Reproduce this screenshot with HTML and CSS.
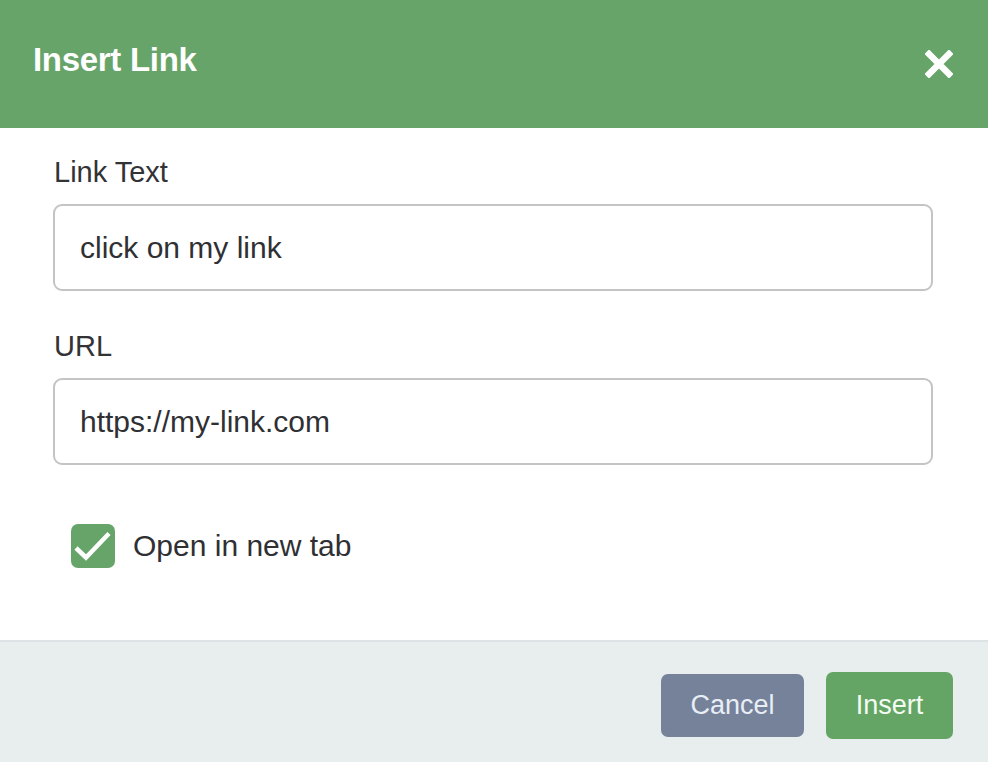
FILE: index.html
```html
<!DOCTYPE html>
<html lang="en">
<head>
    <meta charset="UTF-8">
    <meta name="viewport" content="width=device-width, initial-scale=1.0">
    <title>Insert Link</title>
    <link rel="stylesheet" href="styles.css">
</head>
<body>
    <div class="modal">
        <header class="modal-header">
            <h1>Insert Link</h1>
            <button class="close" aria-label="Close">
                <svg width="28" height="28" viewBox="0 0 28 28">
                    <path d="M4 4 L24 24 M24 4 L4 24" stroke="#fff" stroke-width="6.5" stroke-linecap="square"/>
                </svg>
            </button>
        </header>

        <section class="modal-body">
            <label class="field-label" for="link-text">Link Text</label>
            <input class="field" id="link-text" type="text" value="click on my link">

            <label class="field-label url-label" for="link-url">URL</label>
            <input class="field" id="link-url" type="text" value="https://my-link.com">

            <label class="check">
                <span class="box">
                    <svg width="44" height="44" viewBox="0 0 44 44">
                        <path d="M5 24 L15 33.5 L38 9.5" fill="none" stroke="#fff" stroke-width="4.5"/>
                    </svg>
                </span>
                Open in new tab
            </label>
        </section>

        <footer class="modal-footer">
            <button class="btn btn-cancel">Cancel</button>
            <button class="btn btn-insert">Insert</button>
        </footer>
    </div>
</body>
</html>
```

FILE: styles.css
```css
body {
    margin: 0;
    padding: 0;
    font-family: "Liberation Sans", Arial, sans-serif;
    background-color: #ffffff;
}
.modal {
    height: 762px;
    display: flex;
    flex-direction: column;
    overflow: hidden;
}
.modal-header {
    height: 128px;
    box-sizing: border-box;
    background-color: #66a469;
    display: flex;
    align-items: center;
    justify-content: space-between;
    padding: 0 35px 0 33px;
}
.modal-header h1 {
    margin: 0 0 9px 0;
    color: #ffffff;
    font-size: 33px;
    font-weight: bold;
    letter-spacing: -0.3px;
}
.close {
    background: none;
    border: none;
    padding: 0;
    width: 28px;
    height: 28px;
    cursor: pointer;
}
.close svg {
    display: block;
}
.modal-body {
    flex: 1;
    display: flex;
    flex-direction: column;
    align-items: flex-start;
    padding: 27px 55px 0 53px;
}
.field-label {
    font-size: 29px;
    line-height: 34px;
    color: #333336;
    margin-left: 1px;
    margin-bottom: 15px;
}
.url-label {
    margin-top: 38px;
}
.field {
    width: 100%;
    height: 87px;
    box-sizing: border-box;
    border: 2px solid #c4c4c6;
    border-radius: 9px;
    padding: 0 25px;
    font-family: "Liberation Sans", Arial, sans-serif;
    font-size: 30px;
    color: #2f3033;
    background-color: #ffffff;
    outline: none;
}
.check {
    display: flex;
    align-items: center;
    gap: 18px;
    margin: 59px 0 0 18px;
    font-size: 30px;
    color: #2f3033;
}
.box {
    width: 44px;
    height: 44px;
    border-radius: 7px;
    background-color: #66a469;
}
.box svg {
    display: block;
}
.modal-footer {
    height: 122px;
    box-sizing: border-box;
    background-color: #e8eeee;
    border-top: 2px solid #dde2e4;
    display: flex;
    align-items: center;
    justify-content: flex-end;
    gap: 22px;
    padding: 7px 35px 0 0;
}
.btn {
    border: none;
    border-radius: 7px;
    font-family: "Liberation Sans", Arial, sans-serif;
    font-size: 27px;
    cursor: pointer;
}
.btn-cancel {
    width: 143px;
    height: 63px;
    background-color: #76829a;
    color: #e8eef6;
}
.btn-insert {
    width: 127px;
    height: 67px;
    background-color: #64a565;
    color: #f4fbf2;
}
```
